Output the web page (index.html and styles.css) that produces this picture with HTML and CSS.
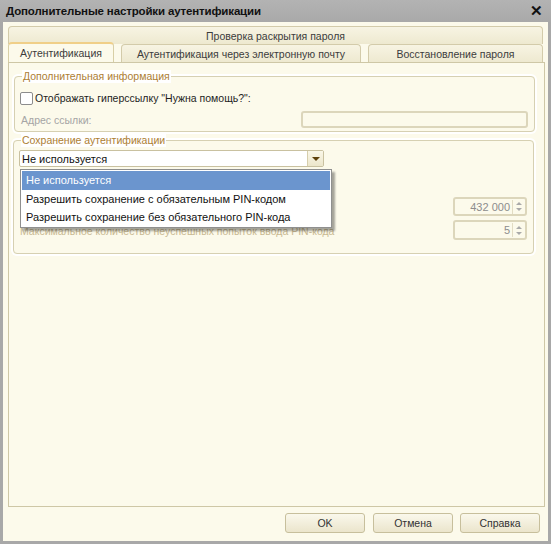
FILE: index.html
```html
<!DOCTYPE html>
<html lang="ru">
<head>
<meta charset="utf-8">
<title>Дополнительные настройки аутентификации</title>
<link rel="stylesheet" href="styles.css">
</head>
<body>
<div class="window">
  <div class="titlebar">
    <span class="title">Дополнительные настройки аутентификации</span>
    <span class="close">✕</span>
  </div>
  <div class="body">
    <div class="tabs">
      <div class="tab-row row1">
        <div class="tab wide">Проверка раскрытия пароля</div>
      </div>
      <div class="tab-row row2">
        <div class="tab active t1">Аутентификация</div>
        <div class="tab t2">Аутентификация через электронную почту</div>
        <div class="tab t3">Восстановление пароля</div>
      </div>
    </div>
    <div class="panel">
      <fieldset class="group g1">
        <legend>Дополнительная информация</legend>
        <div class="row check-row">
          <span class="checkbox"></span>
          <span class="check-label">Отображать гиперссылку "Нужна помощь?":</span>
        </div>
        <div class="row addr-row">
          <span class="muted">Адрес ссылки:</span>
          <span class="field addr"></span>
        </div>
      </fieldset>
      <fieldset class="group g2">
        <legend>Сохранение аутентификации</legend>
        <div class="combo">
          <span class="combo-text">Не используется</span>
          <span class="combo-btn"><span class="tri"></span></span>
        </div>
        <div class="row num-row r1">
          <span class="faded"></span>
          <span class="num"><span class="num-val">432 000</span><span class="spin"><i class="up"></i><i class="dn"></i></span></span>
        </div>
        <div class="row num-row r2">
          <span class="faded">Максимальное количество неуспешных попыток ввода PIN-кода</span>
          <span class="num"><span class="num-val">5</span><span class="spin"><i class="up"></i><i class="dn"></i></span></span>
        </div>
        <ul class="dropdown">
          <li class="sel">Не используется</li>
          <li>Разрешить сохранение с обязательным PIN-кодом</li>
          <li>Разрешить сохранение без обязательного PIN-кода</li>
        </ul>
      </fieldset>
    </div>
    <div class="buttons">
      <button class="btn">OK</button>
      <button class="btn">Отмена</button>
      <button class="btn">Справка</button>
    </div>
  </div>
</div>
</body>
</html>
```

FILE: styles.css
```css
* { box-sizing: border-box; }
html, body { margin: 0; padding: 0; }
body {
  width: 551px;
  height: 544px;
  font-family: "Liberation Sans", Arial, sans-serif;
  font-size: 10.5px;
  color: #222;
  background: #fcfaeb;
}
.window {
  width: 551px;
  height: 544px;
  display: flex;
  flex-direction: column;
  border: 3px solid #a8a8a8;
  border-top: 0;
  background: #fcfaeb;
}
.titlebar {
  height: 22px;
  flex: none;
  background: linear-gradient(#b3b3b3, #a9a9a9);
  display: flex;
  align-items: center;
  justify-content: space-between;
  padding: 0 3px 0 3px;
  margin: 0 -3px;
}
.title {
  font-weight: bold;
  font-size: 11.5px;
  color: #111;
  padding-left: 3px;
  letter-spacing: -0.15px;
}
.close {
  font-size: 15px;
  font-weight: bold;
  color: #111;
  padding-right: 5px;
}
.body {
  flex: 1;
  display: flex;
  flex-direction: column;
  padding: 4px 3px 8px 5px;
}
.tabs {
  display: flex;
  flex-direction: column;
  margin-right: 2px;
  position: relative;
  z-index: 1;
}
.tab-row { display: flex; }
.row2 { margin-top: -1px; gap: 7px; }
.tab {
  height: 18px;
  border: 1px solid #d3cbaa;
  border-bottom: 0;
  border-radius: 4px 4px 0 0;
  background: linear-gradient(#f7f4e3, #eee9d0);
  color: #3c3c3c;
  display: flex;
  align-items: center;
  justify-content: center;
  white-space: nowrap;
}
.wide { flex: 1; }
.row2 .tab { height: 18px; margin-top: 1px; }
.t1 { width: 106px; }
.t2 { width: 240px; }
.t3 { flex: 1; }
.row2 .tab.active {
  height: 20px;
  margin-top: -1px;
  margin-bottom: -1px;
  background: #fcfaeb;
  border-color: #d8cfa6;
  border-top: 2px solid #f0cf88;
  padding-bottom: 1px;
}
.panel {
  flex: 1;
  border: 1px solid #cec7a6;
  background: #fcfaeb;
  padding: 7px 9px 0 5px;
  display: flex;
  flex-direction: column;
  gap: 2px;
}
.group {
  margin: 0;
  border: 1px solid #d6d0b2;
  border-radius: 4px;
  box-shadow: 0 0 0 2px #fff;
  padding: 0 6px 0 5px;
  background: #fcfaeb;
  position: relative;
}
.group legend {
  color: #ad7e33;
  padding: 0 1px;
  margin-left: 2px;
  background: #fff;
  line-height: 13px;
  font-size: 10.5px;
}
.g1 { height: 62px; }
.g2 { height: 120px; margin-left: -1px; margin-right: 1px; }
.row { display: flex; align-items: center; }
.check-row { margin-top: 8px; height: 14px; }
.checkbox {
  width: 13px;
  height: 13px;
  border: 1px solid #8c8c8c;
  border-radius: 2px;
  background: #fff;
  margin-right: 2px;
}
.check-label { color: #1e1e1e; }
.addr-row {
  margin-top: 6px;
  justify-content: space-between;
  height: 17px;
}
.muted { color: #a5a5a5; padding-left: 1px; }
.field {
  display: block;
  border: 2px solid #dcd6bb;
  border-radius: 3px;
  background: #fcfaeb;
}
.addr { width: 227px; height: 17px; }
.combo {
  margin-top: 3px;
  width: 305px;
  height: 17px;
  border: 1px solid #c9c1a0;
  border-radius: 2px;
  background: #fff;
  display: flex;
  align-items: center;
  justify-content: space-between;
  font-size: 11px;
}
.combo-text { padding-left: 2px; color: #111; }
.combo-btn {
  width: 16px;
  height: 15px;
  border-left: 1px solid #d6ceac;
  background: linear-gradient(#faf7e8, #ece6cb);
  display: flex;
  align-items: center;
  justify-content: center;
}
.tri {
  width: 0;
  height: 0;
  border-left: 4px solid transparent;
  border-right: 4px solid transparent;
  border-top: 4px solid #5e410c;
}
.num-row { justify-content: space-between; height: 19px; }
.r1 { margin-top: 30px; }
.r2 { margin-top: 4px; height: 20px; }
.faded { color: #c9b992; padding-left: 1px; margin-top: 1px; }
.num {
  width: 74px;
  height: 100%;
  border: 2px solid #dcd6bb;
  border-radius: 3px;
  background: #fcfaeb;
  display: flex;
  align-items: center;
  justify-content: flex-end;
}
.num-val { color: #8d8d8d; padding-right: 2px; font-size: 11px; }
.spin {
  width: 13px;
  height: 14px;
  border-left: 1px solid #e2dcc3;
  display: flex;
  flex-direction: column;
  align-items: center;
  justify-content: center;
  gap: 3px;
}
.spin i {
  display: block;
  width: 0;
  height: 0;
  border-left: 3px solid transparent;
  border-right: 3px solid transparent;
}
.spin .up { border-bottom: 3px solid #a9a9a9; }
.spin .dn { border-top: 3px solid #a9a9a9; }
.dropdown {
  position: absolute;
  left: 6px;
  top: 22px;
  width: 312px;
  margin: 0;
  padding: 1px;
  list-style: none;
  background: #fff;
  border: 1px solid #8f8f8f;
  box-shadow: 3px 3px 2px rgba(0,0,0,0.35);
  z-index: 5;
  font-size: 11px;
}
.dropdown li {
  height: 18px;
  line-height: 18px;
  padding-left: 4px;
  color: #111;
  white-space: nowrap;
}
.dropdown li.sel { background: #6b95ce; color: #fff; height: 19px; line-height: 19px; }
.buttons {
  display: flex;
  justify-content: flex-end;
  gap: 8px;
  margin-top: 6px;
  padding-right: 5px;
}
.btn {
  width: 80px;
  height: 20px;
  font-family: inherit;
  font-size: 10.5px;
  color: #333;
  border: 1px solid #c7bf9c;
  border-radius: 3px;
  background: linear-gradient(#faf8ec, #ebe5cc);
  padding: 0;
}
.btn + .btn + .btn { margin-left: -1px; }
```
